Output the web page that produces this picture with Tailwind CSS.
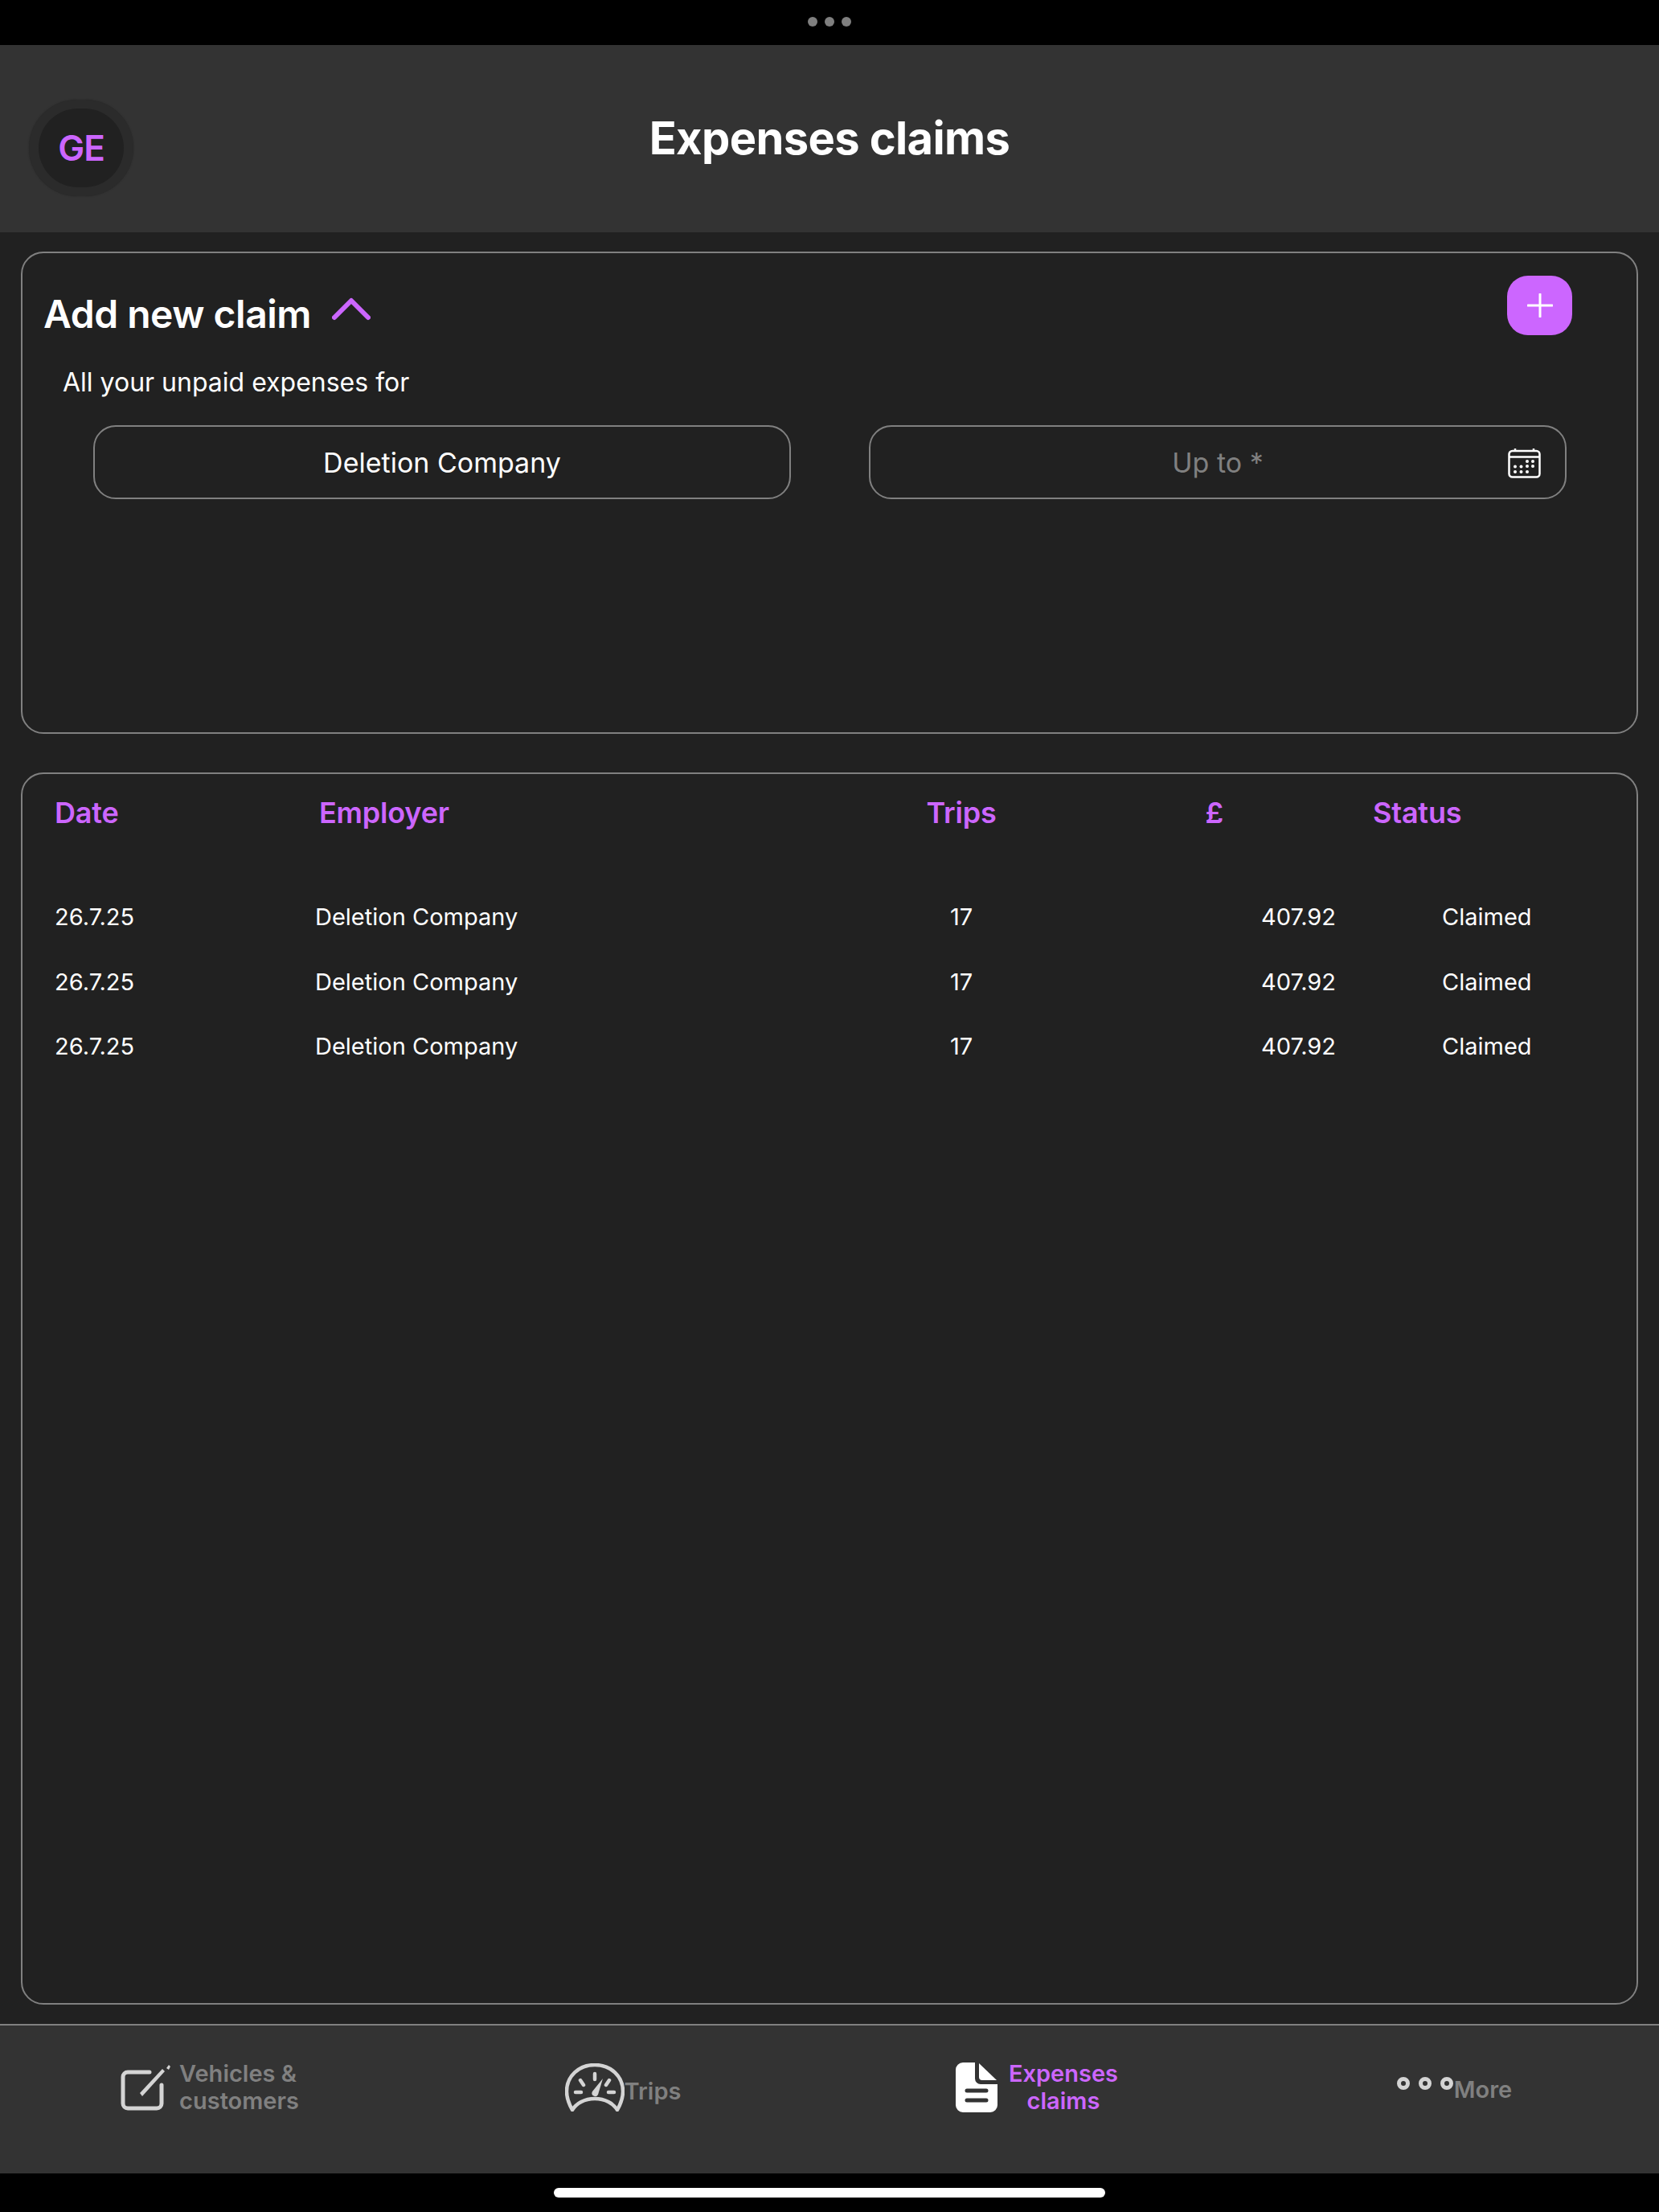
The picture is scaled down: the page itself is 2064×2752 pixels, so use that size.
<!DOCTYPE html>
<html lang="en">
<head>
<meta charset="utf-8">
<script src="https://cdn.jsdelivr.net/npm/@tailwindcss/browser@4"></script>
<title>Expenses claims</title>
</head>
<body class="m-0 bg-black font-['Inter',sans-serif] text-white">
<div class="flex h-[2752px] w-[2064px] flex-col overflow-hidden bg-[#212121]">
  <div class="flex h-[56px] items-center justify-center gap-[9px] bg-black pb-[2px]">
    <span class="size-[12px] rounded-full bg-[#7f7f7f]"></span>
    <span class="size-[12px] rounded-full bg-[#7f7f7f]"></span>
    <span class="size-[12px] rounded-full bg-[#7f7f7f]"></span>
  </div>

  <header class="grid h-[233px] grid-cols-[1fr_auto_1fr] items-start bg-[#333333]">
    <div class="pl-[36px] pt-[68px]">
      <div class="flex h-[120px] w-[130px] items-center justify-center rounded-full bg-[#2b2b2b] shadow-[0_0_2px_#262626]">
        <div class="flex h-[98px] w-[106px] items-center justify-center rounded-full bg-[#212121] text-[44px] font-semibold leading-none tracking-[-1px] text-[#cc66ff]">GE</div>
      </div>
    </div>
    <h1 class="pt-[86px] text-[56px] font-bold leading-[60px] tracking-[-0.6px]">Expenses claims</h1>
    <div></div>
  </header>

  <main class="flex flex-1 flex-col gap-[48px] px-[26px] pt-[24px] pb-[24px]">
    <section class="h-[600px] rounded-[28px] border-2 border-[#808080] pr-[80px]">
      <div class="flex items-start justify-between pl-[26px] pt-[28px]">
        <div class="flex items-center gap-[26px] pt-[20px]">
          <h2 class="text-[48px] font-semibold leading-[56px] tracking-[-0.5px]">Add new claim</h2>
          <svg class="mb-[14px]" width="48" height="30" viewBox="0 0 48 30" fill="none"><path d="M3 26 L24 5 L45 26" stroke="#cc66ff" stroke-width="6" stroke-linecap="round" stroke-linejoin="round"/></svg>
        </div>
        <button class="flex h-[74px] w-[81px] items-center justify-center rounded-[26px] bg-[#cc66ff]">
          <svg width="32" height="30" viewBox="0 0 32 30" fill="none"><path d="M16 1V29M1 15H31" stroke="#fff" stroke-width="3" stroke-linecap="round"/></svg>
        </button>
      </div>
      <p class="pl-[50px] pt-[37px] text-[32px] leading-[40px]">All your unpaid expenses for</p>
      <div class="flex gap-[97px] pl-[88px] pt-[33px]">
        <div class="flex h-[92px] w-[868px] items-center justify-center rounded-[28px] border-2 border-[#808080] text-[34px]">Deletion Company</div>
        <div class="relative flex h-[92px] w-[868px] items-center justify-center rounded-[28px] border-2 border-[#808080] text-[34px] text-[#808080]">
          Up to *
          <svg class="absolute right-[30px] top-[26px]" width="41" height="38" viewBox="0 0 41 38" fill="none">
            <rect x="1.5" y="4" width="38" height="32.5" rx="4" stroke="#fff" stroke-width="2.5"/>
            <path d="M1.5 11.5H39.5M9 1V4M32 1V4" stroke="#fff" stroke-width="2.5"/>
            <g fill="#fff"><circle cx="24" cy="17" r="2"/><circle cx="31" cy="17" r="2"/><circle cx="9" cy="23.5" r="2"/><circle cx="16.5" cy="23.5" r="2"/><circle cx="24" cy="23" r="2"/><circle cx="31" cy="23" r="2"/><circle cx="9" cy="30" r="2"/><circle cx="16.5" cy="30" r="2"/><circle cx="24" cy="30" r="2"/></g>
          </svg>
        </div>
      </div>
    </section>

    <section class="flex-1 rounded-[28px] border-2 border-[#808080]">
      <div class="grid grid-cols-[324px_704px_200px_366px_1fr] pl-[40px] pt-[26px] text-[36px] font-semibold leading-[44px] tracking-[-0.2px] text-[#cc66ff]">
        <div>Date</div>
        <div class="pl-[5px]">Employer</div>
        <div class="text-center">Trips</div>
        <div class="pr-[140px] text-right">£</div>
        <div class="pl-[46px]">Status</div>
      </div>
      <div class="flex flex-col pt-[68px] text-[29px] leading-[80.5px]">
        <div class="grid grid-cols-[324px_704px_200px_366px_1fr] pl-[40px]">
          <div>26.7.25</div><div>Deletion Company</div><div class="text-center">17</div><div class="text-right">407.92</div><div class="pl-[132px]">Claimed</div>
        </div>
        <div class="grid grid-cols-[324px_704px_200px_366px_1fr] pl-[40px]">
          <div>26.7.25</div><div>Deletion Company</div><div class="text-center">17</div><div class="text-right">407.92</div><div class="pl-[132px]">Claimed</div>
        </div>
        <div class="grid grid-cols-[324px_704px_200px_366px_1fr] pl-[40px]">
          <div>26.7.25</div><div>Deletion Company</div><div class="text-center">17</div><div class="text-right">407.92</div><div class="pl-[132px]">Claimed</div>
        </div>
      </div>
    </section>
  </main>

  <nav class="grid h-[186px] grid-cols-4 border-t-2 border-[#808080] bg-[#333333] pb-[30px] text-[29px] font-semibold leading-[34px] text-[#808080]">
    <div class="flex items-center justify-center gap-[9px] pl-[6px]">
      <svg width="64" height="58" viewBox="0 0 64 58" fill="none">
        <path d="M36 10H9a6 6 0 0 0-6 6v33a6 6 0 0 0 6 6h36a6 6 0 0 0 6-6V26" stroke="#d4d4d4" stroke-width="5" stroke-linecap="round"/>
        <path d="M24 36L52 6l3 3L27 40z" fill="#d4d4d4"/><path d="M57 5l3-4 2 2-2 4z" fill="#d4d4d4"/>
      </svg>
      <span>Vehicles &amp;<br>customers</span>
    </div>
    <div class="flex items-center justify-center pl-[2px]">
      <svg width="74" height="60" viewBox="0 0 74 60" fill="none">
        <path d="M9 58C4 49 2 43 2 35 2 16 17 2 37 2s35 14 35 33c0 8-2 14-7 23-5-8-15-14-28-14S14 50 9 58z" stroke="#d4d4d4" stroke-width="4.5" stroke-linejoin="round"/>
        <path d="M37 13v7M19 21l4 6M55 21l-4 6M13 36h7M54 36h7" stroke="#d4d4d4" stroke-width="4.5" stroke-linecap="round"/>
        <path d="M34 35l13-16-6 20a4 4 0 0 1-7-4z" fill="#d4d4d4"/>
      </svg>
      <span class="pt-[10px]">Trips</span>
    </div>
    <div class="flex items-center justify-center gap-[14px]">
      <svg width="52" height="62" viewBox="0 0 52 62" fill="none">
        <path d="M9 0h15v20a7 7 0 0 0 7 7h21v26a9 9 0 0 1-9 9H9a9 9 0 0 1-9-9V9a9 9 0 0 1 9-9z" fill="#fff"/>
        <path d="M29 1l22 21H33a4 4 0 0 1-4-4z" fill="#fff"/>
        <path d="M14 35h24M14 47h24" stroke="#333" stroke-width="5" stroke-linecap="round"/>
      </svg>
      <span class="text-center text-[#cc66ff]">Expenses<br>claims</span>
    </div>
    <div class="flex items-center justify-center pl-[6px]">
      <svg width="72" height="18" viewBox="0 0 72 18" class="mb-[10px]" fill="none">
        <circle cx="9" cy="9" r="5.5" stroke="#d4d4d4" stroke-width="5"/><circle cx="36" cy="9" r="5.5" stroke="#d4d4d4" stroke-width="5"/><circle cx="63" cy="9" r="5.5" stroke="#d4d4d4" stroke-width="5"/>
      </svg>
      <span class="pt-[6px]">More</span>
    </div>
  </nav>

  <div class="flex h-[48px] items-start justify-center bg-black pt-[18px]">
    <div class="h-[12px] w-[686px] rounded-full bg-white"></div>
  </div>
</div>
</body>
</html>
